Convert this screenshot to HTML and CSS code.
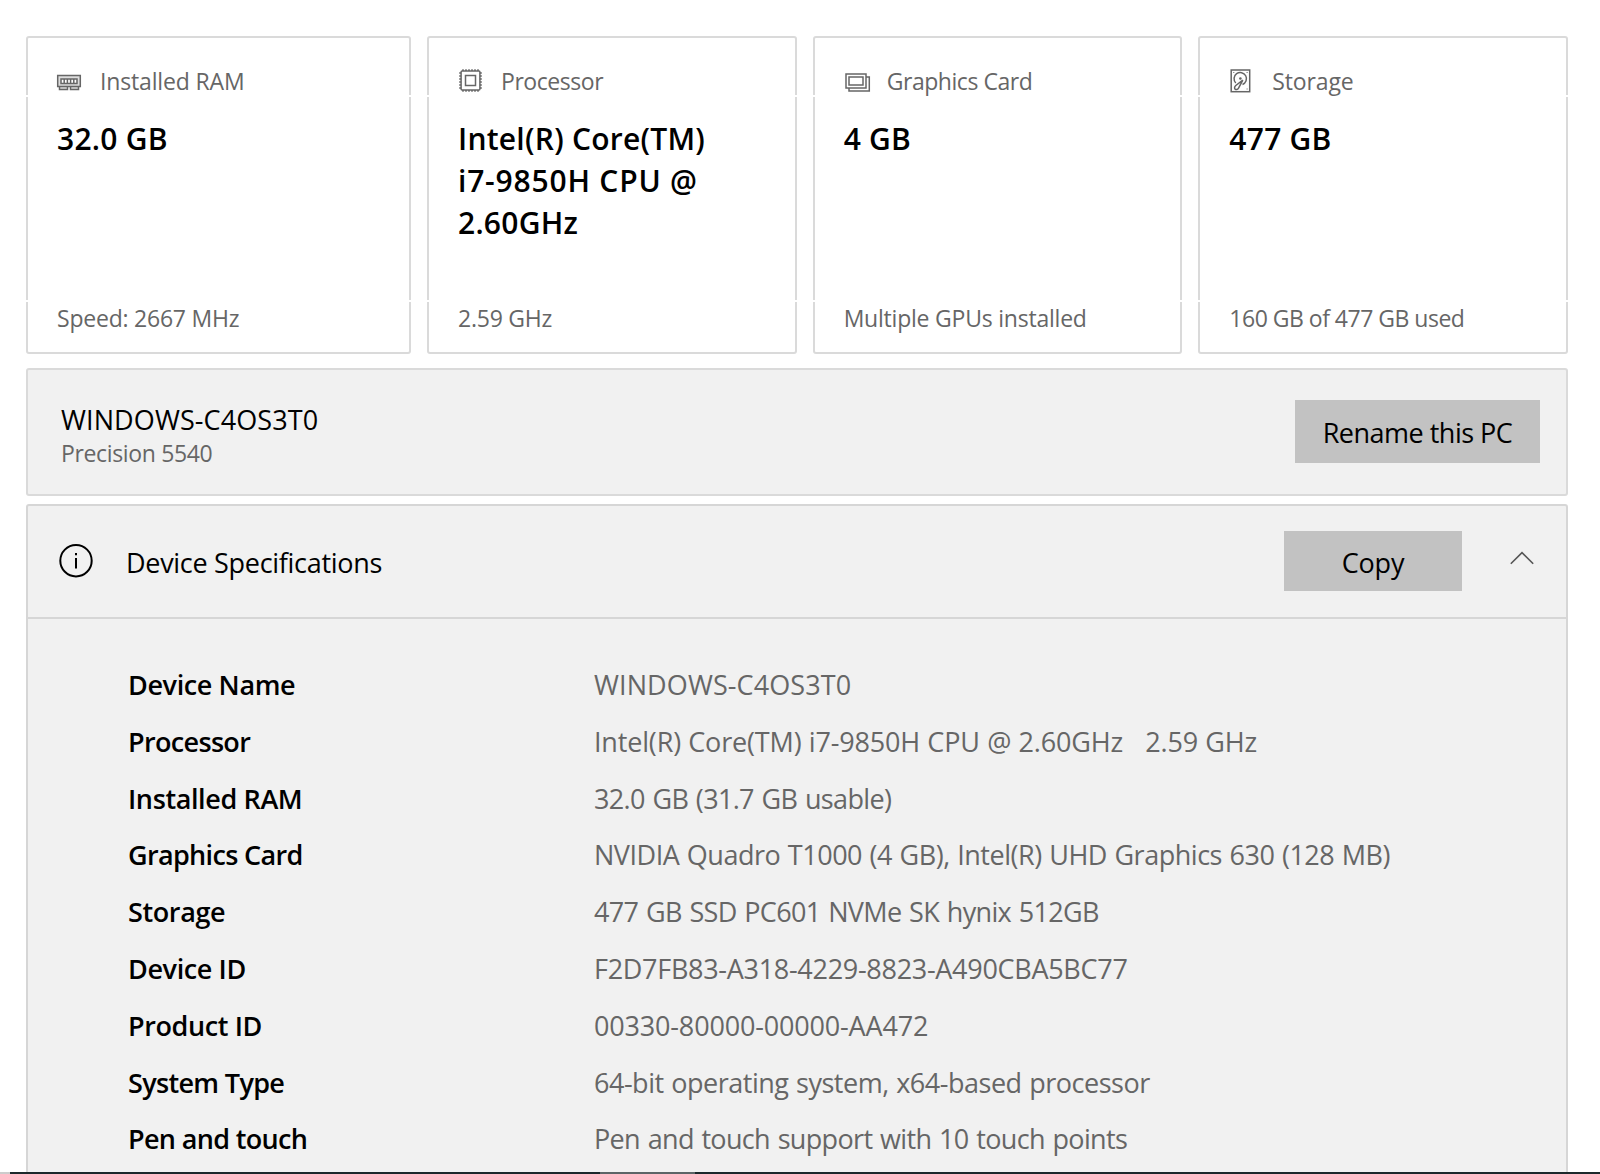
FILE: index.html
```html
<!DOCTYPE html>
<html lang="en">
<head>
    <meta charset="UTF-8">
    <meta name="viewport" content="width=device-width, initial-scale=1.0">
    <title>About</title>
    <link rel="stylesheet" href="styles.css">
</head>
<body>
    <main class="page">
        <section class="cards">
            <div class="card">
                <div class="card-head">
                    <svg class="card-icon" viewBox="0 0 26 26">
                        <path class="fill" d="M.7 7.500h22.600v11H.7zM2.500 18.500h8v3h-8zM13.500 18.500h8v3h-8z"/>
                        <path d="M.7 7.500h22.600v11H.7z"/>
                        <path d="M2.500 18.500v3H10.500v-3M13.500 18.500v3h8v-3"/>
                        <path class="white" d="M4 11h16v4.500H4zM7.200 11v4.500M10.400 11v4.500M13.600 11v4.500M16.800 11v4.500"/>
                    </svg>
                    <span>Installed RAM</span>
                </div>
                <div class="card-value">32.0 GB</div>
                <div class="card-note">Speed: 2667 MHz</div>
            </div>
            <div class="card">
                <div class="card-head">
                    <svg class="card-icon" viewBox="0 0 26 26">
                        <path class="pins" d="M1.200 5h22.600M1.200 8h22.600M1.200 11h22.600M1.200 14h22.600M1.200 17h22.600M1.200 20h22.600M5 1.200v22.600M8 1.200v22.600M11 1.200v22.600M14 1.200v22.600M17 1.200v22.600M20 1.200v22.600"/>
                        <rect class="white" x="3.100" y="3.100" width="18.800" height="18.800" rx="1"/>
                        <rect x="7.500" y="7.500" width="10" height="10"/>
                    </svg>
                    <span class="tight">Processor</span>
                </div>
                <div class="card-value">Intel(R) Core(TM) <span class="wide">i7-9850H CPU @</span> 2.60GHz</div>
                <div class="card-note">2.59 GHz</div>
            </div>
            <div class="card">
                <div class="card-head">
                    <svg class="card-icon" viewBox="0 0 26 26">
                        <path d="M22 9h3.300v14H5v-3"/>
                        <rect x="2" y="6" width="20" height="14"/>
                        <rect x="5" y="9" width="14" height="8"/>
                    </svg>
                    <span class="tight">Graphics Card</span>
                </div>
                <div class="card-value">4 GB</div>
                <div class="card-note">Multiple GPUs installed</div>
            </div>
            <div class="card">
                <div class="card-head">
                    <svg class="card-icon" viewBox="0 0 26 26">
                        <rect x="2.200" y="2" width="18.500" height="21.700"/>
                        <path d="M6.800 15A6.200 6.200 0 1 1 13.500 16.500"/>
                        <path d="M13.800 12.200l-7 5.300c-1.600 1.500-1.500 3.200-.5 3.800 1.200.7 2.800 0 3.500-1.600z"/>
                        <circle class="dot" cx="11.400" cy="10.500" r="1.300"/>
                        <path class="dot" d="M4.300 4h1v1h-1zM17.600 4h1v1h-1zM17.600 20.500h1v1h-1z"/>
                    </svg>
                    <span>Storage</span>
                </div>
                <div class="card-value">477 GB</div>
                <div class="card-note tight">160 GB of 477 GB used</div>
            </div>
        </section>

        <section class="device">
            <div>
                <div class="device-name">WINDOWS-C4OS3T0</div>
                <div class="device-model">Precision 5540</div>
            </div>
            <button class="btn btn-rename">Rename this PC</button>
        </section>

        <section class="specs">
            <div class="specs-head">
                <svg class="info-icon" viewBox="0 0 34 34">
                    <circle cx="17" cy="16.700" r="15.700"/>
                    <path d="M17 14v10.500M17 9v2.300"/>
                </svg>
                <h2>Device Specifications</h2>
                <button class="btn btn-copy">Copy</button>
                <svg class="chevron" viewBox="0 0 24 14">
                    <path d="M.8 12.800L12 1.600l11.200 11.200"/>
                </svg>
            </div>
            <dl class="spec-list">
                <dt>Device Name</dt>
                <dd class="wide">WINDOWS-C4OS3T0</dd>
                <dt class="tight">Processor</dt>
                <dd class="normal">Intel(R) Core(TM) i7-9850H CPU @ 2.60GHz <span class="clock">2.59 GHz</span></dd>
                <dt>Installed RAM</dt>
                <dd class="tight">32.0 GB (31.7 GB usable)</dd>
                <dt class="tight">Graphics Card</dt>
                <dd>NVIDIA Quadro T1000 (4 GB), Intel(R) UHD Graphics 630 (128 MB)</dd>
                <dt>Storage</dt>
                <dd class="tight">477 GB SSD PC601 NVMe SK hynix 512GB</dd>
                <dt>Device ID</dt>
                <dd class="id">F2D7FB83-A318-4229-8823-A490CBA5BC77</dd>
                <dt>Product ID</dt>
                <dd class="normal">00330-80000-00000-AA472</dd>
                <dt class="tight">System Type</dt>
                <dd>64-bit operating system, x64-based processor</dd>
                <dt class="tight">Pen and touch</dt>
                <dd class="tight">Pen and touch support with 10 touch points</dd>
            </dl>
        </section>
    </main>
    <div class="taskbar"></div>
</body>
</html>
```
FILE: styles.css
```css
* {
    margin: 0;
    padding: 0;
    box-sizing: border-box;
}

body {
    font-family: 'Segoe UI', 'Open Sans', sans-serif;
    background: #fff;
    color: #000;
    height: 100vh;
    overflow: hidden;
}

.page {
    padding: 36px 32px 0 26px;
}

/* Summary cards */
.cards {
    display: grid;
    grid-template-columns: 385px 1fr 1fr 1fr;
    gap: 16px;
}

.card {
    position: relative;
    display: flex;
    flex-direction: column;
    height: 318px;
    padding: 28px 28px 19px 29px;
    border: 2px solid #dadada;
    border-radius: 3px;
}

/* small breaks in the side borders */
.card::before,
.card::after {
    content: '';
    position: absolute;
    top: 57px;
    left: -2px;
    width: 2px;
    height: 203px;
    border: solid #fff;
    border-width: 2px 0;
}

.card::after {
    left: auto;
    right: -2px;
}

.card-head {
    display: flex;
    align-items: center;
    gap: 17px;
    height: 30px;
    font-size: 23px;
    line-height: 30px;
    letter-spacing: -0.15px;
    color: #666;
}

.card-head .tight {
    letter-spacing: -0.45px;
}

.card-icon {
    width: 26px;
    height: 26px;
    fill: none;
    stroke: #666;
    stroke-width: 1.5;
    overflow: visible;
}

.card-icon .fill {
    fill: #ddd;
    stroke: none;
}

.card-icon .white {
    fill: #fff;
}

.card-icon .dot {
    fill: #666;
    stroke: none;
}

.card-value {
    margin-top: 22px;
    font-size: 30px;
    font-weight: 600;
    line-height: 42px;
    letter-spacing: 0.25px;
}

.card-value .wide {
    display: block;
    letter-spacing: 0.8px;
    white-space: nowrap;
}

.card-note {
    margin-top: auto;
    font-size: 23px;
    line-height: 30px;
    letter-spacing: -0.22px;
    color: #666;
}

.card-note.tight {
    letter-spacing: -0.5px;
}

/* Device name bar */
.device {
    display: flex;
    align-items: flex-start;
    justify-content: space-between;
    height: 128px;
    margin-top: 14px;
    padding: 30px 26px 0 33px;
    background: #f1f1f1;
    border: 2px solid #dadada;
    border-radius: 3px;
}

.device-name {
    margin-top: 2px;
    font-size: 27px;
    line-height: 36px;
    letter-spacing: 0.1px;
}

.device-model {
    font-size: 23px;
    line-height: 30px;
    letter-spacing: -0.35px;
    color: #666;
}

.btn {
    font-family: inherit;
    font-size: 27px;
    letter-spacing: -0.5px;
    color: #000;
    background: #c2c2c2;
    border: none;
}

.btn-rename {
    width: 245px;
    height: 63px;
    padding-top: 2px;
}

.btn-copy {
    width: 178px;
    height: 60px;
    padding-top: 3px;
    margin-left: auto;
    letter-spacing: -0.2px;
}

/* Specifications */
.specs {
    height: 700px;
    margin-top: 8px;
    background: #f1f1f1;
    border: 2px solid #d6d6d6;
    border-radius: 3px 3px 0 0;
}

.specs-head {
    display: flex;
    align-items: center;
    height: 113px;
    padding: 0 32px 2px 31px;
    border-bottom: 2px solid #d6d6d6;
}

.specs-head h2 {
    margin-left: 33px;
    padding-top: 5px;
    font-size: 27px;
    font-weight: 400;
    line-height: 36px;
    letter-spacing: -0.3px;
}

.info-icon {
    width: 34px;
    height: 34px;
    fill: none;
    stroke: #000;
    stroke-width: 2;
}

.chevron {
    width: 24px;
    height: 14px;
    margin-left: 48px;
    margin-bottom: 5px;
    fill: none;
    stroke: #555;
    stroke-width: 1.6;
}

.spec-list {
    display: grid;
    grid-template-columns: 466px 1fr;
    padding: 38px 0 0 100px;
    font-size: 27px;
    line-height: 56.8px;
    white-space: nowrap;
}

.spec-list dt {
    font-weight: 600;
    letter-spacing: -0.38px;
}

.spec-list dd {
    color: #666;
    letter-spacing: -0.48px;
    word-spacing: 1px;
}

.spec-list dd.wide {
    letter-spacing: 0.1px;
}

.spec-list dd.normal {
    letter-spacing: -0.17px;
    word-spacing: 0.5px;
}

.spec-list dd.id {
    letter-spacing: -0.29px;
}

.spec-list .tight {
    letter-spacing: -0.66px;
}

.spec-list dd.tight {
    word-spacing: 1.3px;
}

.clock {
    margin-left: 15px;
}

/* Edge of the taskbar along the bottom of the screen */
.taskbar {
    position: fixed;
    left: 0;
    right: 0;
    bottom: 0;
    height: 2px;
    background: linear-gradient(90deg, #ccc 10px, #1c282b 10px, #1c282b 600px, #5c6466 600px, #5c6466 695px, #1c282b 695px);
}
```
